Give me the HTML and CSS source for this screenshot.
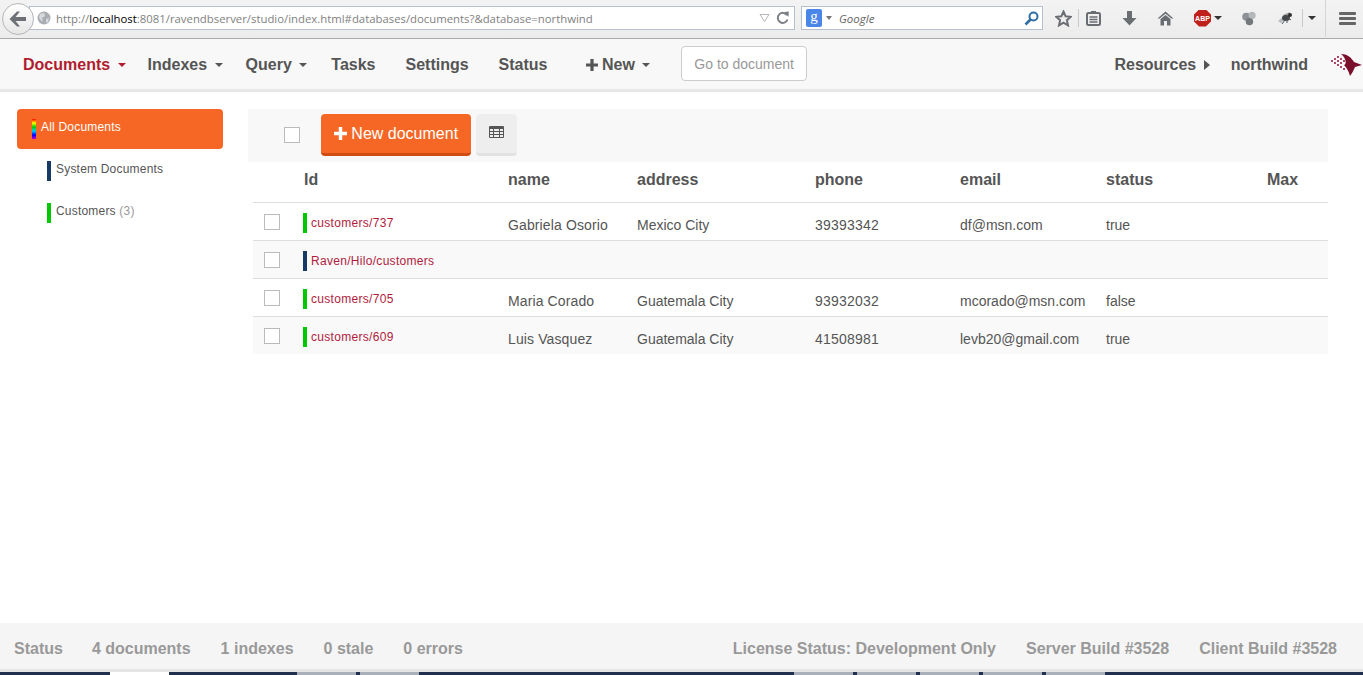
FILE: index.html
```html
<!DOCTYPE html>
<html lang="en">
<head>
  <meta charset="UTF-8" />
  <title>RavenDB Studio - Documents</title>
  <link rel="stylesheet" href="styles.css">
</head>
<body>

<!-- Browser toolbar -->
<div class="browser">
  <div class="back">
    <svg width="20" height="18" viewBox="0 0 20 18"><path d="M9 1.5 L1.5 9 L9 16.5 L12 16.5 L7.5 11 L18 11 L18 7 L7.5 7 L12 1.5 Z" fill="#6d7177"/></svg>
  </div>
  <div class="urlbar">
    <svg class="globe" width="14" height="14" viewBox="0 0 14 14"><circle cx="7" cy="7" r="6.5" fill="#a9adb1"/><path d="M3 3 L7 2 L8 5 L5 7 L6 11 L3.5 9 L2 6 Z M9 8 L12 7 L11 11 L9 12 Z" fill="#d8dadc"/></svg>
    <span class="url">http://<b>localhost</b>:8081/ravendbserver/studio/index.html#databases/documents?&amp;database=northwind</span>
    <svg class="url-drop" width="11" height="8" viewBox="0 0 11 8"><path d="M1 .5 H10 L5.5 7.5 Z" fill="none" stroke="#b4b8bc"/></svg>
    <svg class="reload" width="13" height="14" viewBox="0 0 13 14"><path d="M11 4.2 A5 5 0 1 0 11.5 8.5" fill="none" stroke="#7d8186" stroke-width="2"/><path d="M8 1 L12.8 0.5 L12.5 6 Z" fill="#7d8186"/></svg>
  </div>
  <div class="searchbar">
    <span class="g-box">g</span>
    <span class="tiny-caret"></span>
    <span class="engine">Google</span>
    <svg class="lens" width="15" height="15" viewBox="0 0 15 15"><circle cx="9.5" cy="5.5" r="4" fill="none" stroke="#2f6ea5" stroke-width="2"/><path d="M6.5 8.5 L1.5 13.5" stroke="#2f6ea5" stroke-width="2.6"/></svg>
  </div>
  <div class="tools">
    <svg class="t-star" width="17" height="17" viewBox="0 0 17 17"><path d="M8.5 1.5 L10.6 6.3 L15.8 6.8 L11.9 10.2 L13 15.4 L8.5 12.7 L4 15.4 L5.1 10.2 L1.2 6.8 L6.4 6.3 Z" fill="none" stroke="#6a6e73" stroke-width="2"/></svg>
    <span class="t-sep"></span>
    <svg class="t-clip" width="15" height="16" viewBox="0 0 15 16"><rect x="1" y="3" width="13" height="12" rx="1.5" fill="none" stroke="#6a6e73" stroke-width="2"/><rect x="5" y="1" width="5" height="3" fill="#6a6e73"/><path d="M3.5 7 H11.5 M3.5 9.5 H11.5 M3.5 12 H11.5" stroke="#6a6e73" stroke-width="1.4"/></svg>
    <svg class="t-down" width="15" height="16" viewBox="0 0 15 16"><path d="M5 1 H10 V8 H14.5 L7.5 15.5 L.5 8 H5 Z" fill="#6a6e73"/></svg>
    <svg class="t-home" width="17" height="15" viewBox="0 0 17 15"><path d="M8.5 .5 L16.5 7.5 L14.5 7.5 L8.5 2.8 L2.5 7.5 L.5 7.5 Z M3.5 8 L8.5 4 L13.5 8 V14.5 H10 V10 H7 V14.5 H3.5 Z" fill="#6a6e73"/></svg>
    <span class="abp">ABP</span>
    <span class="dark-caret abp-caret"></span>
    <svg class="t-dots" width="16" height="17" viewBox="0 0 18 18"><circle cx="6" cy="7" r="4.6" fill="#8d9196"/><circle cx="12.5" cy="5.5" r="4" fill="#b5b8bb"/><circle cx="9.5" cy="12.5" r="4.2" fill="#74787c"/></svg>
    <svg class="t-fly" width="16" height="14" viewBox="0 0 16 14"><path d="M1 10 L7 5 L9 8 L4 12 Z" fill="#b9bcbf"/><path d="M6 4 L13 1 L12 5 L8 7 Z" fill="#9da0a3"/><ellipse cx="9" cy="7" rx="4" ry="3" fill="#45484b"/><circle cx="13" cy="4" r="2" fill="#2e3032"/><path d="M5 13 L8 9 M10 12 L10 9 M14 9 L11 7" stroke="#55585b"/></svg>
    <span class="t-sep t-sep-b"></span>
    <span class="dark-caret more-caret"></span>
    <span class="t-divider"></span>
    <span class="burger"><i></i><i></i><i></i></span>
  </div>
</div>

<!-- Studio navigation -->
<nav class="topnav">
  <a class="nav-item active has-caret item-docs" href="#">Documents <span class="caret"></span></a>
  <a class="nav-item has-caret" href="#">Indexes <span class="caret"></span></a>
  <a class="nav-item has-caret item-query" href="#">Query <span class="caret"></span></a>
  <a class="nav-item" href="#">Tasks</a>
  <a class="nav-item" href="#">Settings</a>
  <a class="nav-item item-status" href="#">Status</a>
  <a class="nav-item nav-new has-caret" href="#"><svg class="plus" width="12" height="12" viewBox="0 0 12 12"><path d="M4.4 0 H7.6 V4.4 H12 V7.6 H7.6 V12 H4.4 V7.6 H0 V4.4 H4.4 Z" fill="#555"/></svg> New <span class="caret"></span></a>
  <input class="goto" type="text" placeholder="Go to document" />
  <div class="nav-right">
    <a class="nav-item item-res" href="#">Resources <span class="caret-right"></span></a>
    <a class="nav-item db-name" href="#">northwind</a>
    <svg class="logo" width="32" height="24" viewBox="0 0 32 24">
      <path d="M11 1 C17 1 21 4 24 9 L32 12 L25 14 C24 16 23 19 20 23 C19 19 17 15 14 12 C17 11 16 5 11 1 Z" fill="#7a0f2c"/>
      <g fill="#b0476a">
        <rect x="1" y="7" width="2" height="2"/><rect x="4" y="5" width="2" height="2"/><rect x="4" y="9" width="2" height="2"/>
        <rect x="7" y="3" width="2" height="2"/><rect x="7" y="7" width="2" height="2"/><rect x="7" y="11" width="2" height="2"/>
        <rect x="10" y="5" width="2" height="2"/><rect x="10" y="9" width="2" height="2"/><rect x="10" y="13" width="2" height="2"/>
        <rect x="13" y="7" width="2" height="2"/><rect x="13" y="15" width="2" height="2"/>
      </g>
    </svg>
  </div>
</nav>

<div class="main">
  <!-- Collections -->
  <aside class="sidebar">
    <div class="coll coll-all"><span class="mark rainbow"></span><span class="coll-name">All Documents</span></div>
    <div class="coll"><span class="mark navy"></span><span class="coll-name">System Documents</span></div>
    <div class="coll"><span class="mark green"></span><span class="coll-name">Customers <span class="count">(3)</span></span></div>
  </aside>

  <section class="content">
    <div class="toolbar">
      <span class="check check-all"></span>
      <button class="btn-new"><svg class="plus" width="13" height="13" viewBox="0 0 12 12"><path d="M4.4 0 H7.6 V4.4 H12 V7.6 H7.6 V12 H4.4 V7.6 H0 V4.4 H4.4 Z" fill="#fff"/></svg> New document</button>
      <button class="btn-grid">
        <svg width="15" height="12" viewBox="0 0 15 12"><path d="M0 1 Q0 0 1 0 H14 Q15 0 15 1 V11 Q15 12 14 12 H1 Q0 12 0 11 Z" fill="#555"/><path d="M1 3 H4 V5 H1 Z M5 3 H10 V5 H5 Z M11 3 H14 V5 H11 Z M1 6 H4 V8 H1 Z M5 6 H10 V8 H5 Z M11 6 H14 V8 H11 Z M1 9 H4 V11 H1 Z M5 9 H10 V11 H5 Z M11 9 H14 V11 H11 Z" fill="#eee"/></svg>
      </button>
    </div>

    <div class="doc-table">
      <div class="doc-row doc-head">
        <span></span><span class="head-id">Id</span><span>name</span><span>address</span><span>phone</span><span>email</span><span>status</span><span>Max</span>
      </div>
      <div class="doc-row">
        <span class="check"></span>
        <a class="doc-id"><span class="mark green"></span>customers/737</a>
        <span>Gabriela Osorio</span><span>Mexico City</span><span>39393342</span><span>df@msn.com</span><span>true</span><span></span>
      </div>
      <div class="doc-row">
        <span class="check"></span>
        <a class="doc-id"><span class="mark navy"></span>Raven/Hilo/customers</a>
        <span></span><span></span><span></span><span></span><span></span><span></span>
      </div>
      <div class="doc-row">
        <span class="check"></span>
        <a class="doc-id"><span class="mark green"></span>customers/705</a>
        <span>Maria Corado</span><span>Guatemala City</span><span>93932032</span><span>mcorado@msn.com</span><span>false</span><span></span>
      </div>
      <div class="doc-row">
        <span class="check"></span>
        <a class="doc-id"><span class="mark green"></span>customers/609</a>
        <span>Luis Vasquez</span><span>Guatemala City</span><span>41508981</span><span>levb20@gmail.com</span><span>true</span><span></span>
      </div>
    </div>
  </section>
</div>

<footer class="statusbar">
  <span class="first">Status</span>
  <span>4 documents</span>
  <span>1 indexes</span>
  <span>0 stale</span>
  <span>0 errors</span>
  <span class="status-right">License Status: Development Only</span>
  <span>Server Build #3528</span>
  <span>Client Build #3528</span>
</footer>

<!-- Windows taskbar peeking in at the bottom -->
<div class="taskbar">
  <i class="tb-a"></i><i class="tb-b"></i><i class="tb-c"></i>
  <i class="tb-d"></i><i class="tb-c"></i><i class="tb-c"></i><i class="tb-c"></i><i class="tb-c"></i>
</div>

</body>
</html>
```

FILE: styles.css
```css
* { box-sizing: border-box; }
html, body { height: 100%; }
body { margin: 0; height: 675px; overflow: hidden; display: flex; flex-direction: column; background: #fff; font-family: "Liberation Sans", Arial, sans-serif; color: #555; }
a { color: inherit; text-decoration: none; }

/* browser toolbar */
.browser { height: 39px; flex: none; display: flex; align-items: center; background: linear-gradient(#f3f3f3, #ececec); border-bottom: 1px solid #a9a9a9; position: relative; padding-left: 2px; }
.back { width: 32px; height: 32px; margin-top: -1px; flex: none; z-index: 1; border-radius: 50%; border: 1px solid #b4b6b9; background: linear-gradient(#fff, #e6e6e6); display: flex; align-items: center; justify-content: center; }
.urlbar { margin-left: -5px; width: 766px; height: 24px; margin-top: -2px; background: #fff; border: 1px solid #b6c0cc; display: flex; align-items: center; padding-left: 7px; }
.globe { flex: none; }
.url { margin-left: 5px; font: 11.35px "Open Sans", sans-serif; color: #7f7f7f; white-space: nowrap; }
.url b { font-weight: 400; color: #000; }
.url-drop { margin-left: auto; }
.reload { margin: 0 5px 0 6px; }
.searchbar { margin-left: 6px; width: 242px; height: 24px; margin-top: -2px; background: #fff; border: 1px solid #b6c0cc; display: flex; align-items: center; padding-left: 4px; position: relative; }
.g-box { width: 16px; height: 18px; background: #4a86e8; border-radius: 2px; color: #fff; font: 15px/15px "Liberation Serif", serif; text-align: center; }
.tiny-caret { margin-left: 4px; border: 3px solid transparent; border-top: 4px solid #777; border-bottom: 0; }
.engine { margin-left: 7px; font: italic 11.5px "Open Sans", sans-serif; color: #666; }
.lens { margin-left: auto; margin-right: 3px; }
.tools { flex: 1; display: flex; align-items: center; height: 100%; margin-top: -2px; position: relative; }
.t-star { margin-left: 12px; }
.t-sep { width: 1px; height: 18px; background: #c9c9c9; margin-left: 6px; }
.t-clip { margin-left: 7px; }
.t-down { margin-left: 21px; }
.t-home { margin-left: 20px; }
.abp { margin-left: 20px; width: 17px; height: 17px; background: #c0201c; color: #fff; font: bold 7px/17px "Liberation Sans", sans-serif; text-align: center; clip-path: polygon(30% 0, 70% 0, 100% 30%, 100% 70%, 70% 100%, 30% 100%, 0 70%, 0 30%); }
.dark-caret { border: 4px solid transparent; border-top: 4px solid #333; border-bottom: 0; }
.abp-caret { margin-left: 3px; }
.t-dots { margin-left: 19px; }
.t-fly { margin-left: 20px; }
.t-sep-b { margin-left: 9px; }
.more-caret { margin-left: 5px; }
.t-divider { width: 1px; height: 37px; background: #d2d6da; margin-left: 9px; }
.burger { margin-left: 13px; width: 17px; display: flex; flex-direction: column; gap: 2px; }
.burger i { height: 3px; background: #666; border-radius: 1px; }

/* studio nav */
.topnav { height: 53px; flex: none; display: flex; align-items: center; padding: 1px 0 0 8px; background: #f8f8f8; border-bottom: 3px solid #e7e7e7; }
.nav-item { font-size: 16px; font-weight: bold; padding: 0 15px; color: #555; white-space: nowrap; }
.nav-item.active { color: #b01c2e; }
.has-caret { margin-right: -7px; }
.has-caret.item-docs { margin-right: -8px; }
.has-caret.item-query { margin-right: -6px; }
.item-status { margin-right: 8px; }
.nav-new { margin-right: 0; }
.caret { display: inline-block; vertical-align: middle; margin-left: 3px; border: 4px solid transparent; border-top: 4px solid currentColor; border-bottom: 0; }
.caret-right { display: inline-block; vertical-align: middle; margin-left: 3px; margin-top: -1px; border: 5px solid transparent; border-left: 6px solid #555; border-right: 0; }
.item-res { margin-right: -9px; }
.plus { vertical-align: -1px; }
.goto { width: 126px; height: 35px; margin: -2px 0 0 16px; padding: 0 11px 0 12px; background: #fff; border: 1px solid #ccc; border-radius: 4px; font: 14px "Liberation Sans", sans-serif; }
.goto::placeholder { color: #999; opacity: 1; }
.nav-right { margin-left: auto; display: flex; align-items: center; }
.db-name { padding-right: 22px; }
.logo { margin-right: 1px; }

/* page body */
.main { flex: 1; display: flex; min-height: 0; padding-top: 17px; }
.sidebar { width: 248px; flex: none; padding: 0 25px 0 17px; }
.coll { height: 42px; display: flex; align-items: center; padding-left: 30px; font-size: 12px; letter-spacing: .2px; color: #555; }
.coll-all { height: 40px; margin-bottom: 1px; padding-left: 15px; border-radius: 4px; background: #f66725; color: #fff; }
.coll-name { margin-bottom: 4px; }
.count { color: #999; }
.mark { display: inline-block; flex: none; width: 4px; height: 20px; margin-right: 5px; }
.green { background: #00c800; }
.navy { background: #163a63; }
.rainbow { background: linear-gradient(#f00, #ff0, #0c0, #0cf, #00f, #c0c); }

.content { width: 1080px; flex: none; }
.toolbar { height: 53px; background: #f8f8f8; display: flex; align-items: flex-start; padding-top: 5px; }
.check { display: block; width: 16px; height: 16px; background: #fff; border: 1px solid #bbb; }
.check-all { margin: 13px 21px 0 36px; }
.btn-new { width: 150px; height: 42px; border: 0; border-bottom: 3px solid #d04c10; border-radius: 4px; background: #f66725; color: #fff; font: 16px "Liberation Sans", sans-serif; }
.btn-grid { width: 41px; height: 42px; margin-left: 5px; border: 0; border-bottom: 3px solid #e2e2e2; border-radius: 4px; background: #eee; }

.doc-table { margin-left: 5px; }
.doc-row { display: grid; grid-template-columns: 50px 205px 129px 178px 145px 146px 161px 61px; height: 38px; border-top: 1px solid #ddd; font-size: 14px; color: #555; align-items: center; }
.doc-row > span { padding-top: 6px; white-space: nowrap; }
.doc-row:nth-child(odd) { background: #f9f9f9; }
.doc-row > span:nth-child(3) { letter-spacing: .12px; }
.doc-row > span:nth-child(5) { letter-spacing: .22px; }
.doc-row .check { margin: 0 0 0 11px; padding: 0; }
.doc-row.doc-head { height: 41px; border-top: 0; border-bottom: 1px solid #ddd; background: #fff; font-size: 16px; font-weight: bold; }
.doc-row.doc-head > span { padding: 0 0 4px; letter-spacing: 0; }
.head-id { margin-left: 1px; }
.doc-head + .doc-row { height: 37px; border-top: 0; background: #fff; }
.doc-id { display: flex; align-items: center; padding-top: 2px; font-size: 12px; letter-spacing: .3px; color: #b01c3c; }
.doc-id .mark { margin-right: 4px; }

/* status bar */
.statusbar { height: 49px; flex: none; display: flex; align-items: center; gap: 30px; padding: 6px 26px 0 14px; background: #f5f5f5; border-bottom: 3px solid #e5e5e5; font-size: 16px; font-weight: bold; color: #999; }
.first { margin-right: -1px; }
.status-right { margin-left: auto; }

.taskbar { height: 3px; flex: none; display: flex; background: #1f2f4d; padding-left: 110px; }
.taskbar i { display: block; width: 59px; background: #aab0ba; }
.taskbar .tb-a { background: #fff; }
.taskbar .tb-b { margin-left: 128px; }
.taskbar .tb-c { margin-left: 4px; }
.taskbar .tb-d { margin-left: 375px; }
```
